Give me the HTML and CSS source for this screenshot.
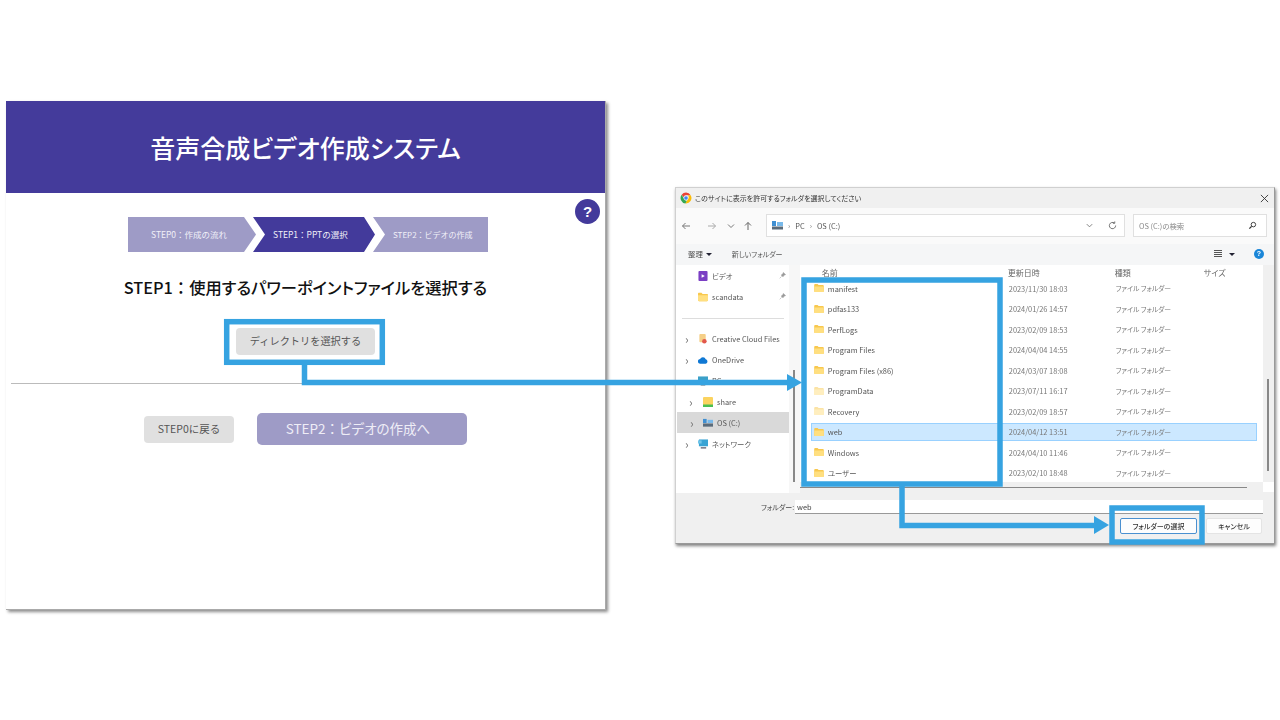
FILE: index.html
```html
<!DOCTYPE html>
<html lang="ja">
  <head>
    <meta charset="UTF-8" />
    <title>音声合成ビデオ作成システム</title>
    <link rel="stylesheet" href="styles.css">
  </head>
  <body>
    <svg class="defs" width="0" height="0">
      <symbol id="folder" viewBox="0 0 12 10">
        <path d="M0 1.2C0 .5.5 0 1.2 0h3l1.3 1.3h5.3c.7 0 1.2.5 1.2 1.2V9c0 .6-.5 1-1.2 1H1.2C.5 10 0 9.600 0 9z" fill="#f8c84e"/>
        <path d="M0 3h12v6c0 .6-.5 1-1.200 1H1.200C.5 10 0 9.600 0 9z" fill="#ffdf80"/>
      </symbol>
    </svg>

    <main class="canvas">
      <!-- left: the web app -->
      <section class="app">
        <header class="app-header">
          <h1>音声合成ビデオ作成システム</h1>
        </header>
        <div class="help">?</div>
        <div class="steps">
          <div class="step step-first">STEP0：作成の流れ</div>
          <div class="step step-current">STEP1：PPTの選択</div>
          <div class="step step-last">STEP2：ビデオの作成</div>
        </div>
        <h2 class="app-title">STEP1<span class="colon">：</span>使用するパワーポイントファイルを選択する</h2>
        <div class="dir-row">
          <button class="btn-grey btn-dir">ディレクトリを選択する</button>
        </div>
        <hr class="app-line" />
        <div class="nav-row">
          <button class="btn-grey btn-back">STEP0に戻る</button>
          <button class="btn-next">STEP2<span class="colon">：</span>ビデオの作成へ</button>
        </div>
      </section>

      <!-- right: folder picker dialog -->
      <section class="dialog">
        <div class="titlebar">
          <svg class="chrome" viewBox="0 0 20 20">
            <path d="M10 1a9 9 0 0 1 7.800 4.500H10a4.500 4.500 0 0 0-4.300 3.200L2.800 4.600A9 9 0 0 1 10 1z" fill="#ea4335"/>
            <path d="M2.800 4.600l4.300 7.600a4.500 4.500 0 0 0 4.800 2.200L9 19a9 9 0 0 1-6.200-14.400z" fill="#34a853"/>
            <path d="M17.800 5.500A9 9 0 0 1 9 19l4.400-7.500a4.500 4.500 0 0 0-.3-6z" fill="#fbbc05"/>
            <circle cx="10" cy="10" r="3.500" fill="#4285f4" stroke="#fff" stroke-width=".8"/>
          </svg>
          <span class="titlebar-text">このサイトに表示を許可するフォルダを選択してください</span>
          <svg class="close" viewBox="0 0 10 10"><path d="M1 1l8 8M9 1l-8 8" stroke="#333" stroke-width="1" fill="none"/></svg>
        </div>

        <div class="address">
          <svg class="arrow-ico dim2" viewBox="0 0 10 10"><path d="M9 5H1.500M4.500 2L1.500 5l3 3" stroke="#777" fill="none"/></svg>
          <svg class="arrow-ico dim" viewBox="0 0 10 10"><path d="M1 5h7.500M5.500 2l3 3-3 3" stroke="#aaa" fill="none"/></svg>
          <svg class="arrow-ico small" viewBox="0 0 10 10"><path d="M2 3.500l3 3 3-3" stroke="#777" fill="none"/></svg>
          <svg class="arrow-ico" viewBox="0 0 10 10"><path d="M5 9V1.500M2 4.500l3-3 3 3" stroke="#666" fill="none"/></svg>
          <div class="pathbox">
            <svg class="pc-ico" viewBox="0 0 11 9"><rect x="0" y="0" width="4" height="5" fill="#3f8fd2"/><rect x="5" y="1" width="6" height="4" fill="#78b9ea"/><rect x="0" y="5.500" width="11" height="3" fill="#5a6b7a"/></svg>
            <span class="crumb">›</span><span>PC</span><span class="crumb">›</span><span>OS (C:)</span>
            <span class="spacer"></span>
            <svg class="path-chev" viewBox="0 0 10 10"><path d="M2 3.500l3 3 3-3" stroke="#777" fill="none"/></svg>
            <svg class="refresh" viewBox="0 0 10 10"><path d="M8.500 5A3.500 3.500 0 1 1 7 2.200M7.500 .5V2.500H5.500" stroke="#666" fill="none"/></svg>
          </div>
          <div class="searchbox">
            <span>OS (C:)の検索</span>
            <svg class="search-ico" viewBox="0 0 10 10"><circle cx="6" cy="4" r="2.500" stroke="#333" fill="none"/><path d="M4 6L1.500 8.500" stroke="#333" stroke-width="1.400"/></svg>
          </div>
        </div>

        <div class="toolbar">
          <span class="tool-org">整理</span><span class="caret"></span>
          <span class="tool-new">新しいフォルダー</span>
          <span class="spacer"></span>
          <svg class="view-ico" viewBox="0 0 8 7"><path d="M0 .5h8M0 2.500h8M0 4.500h8M0 6.500h8" stroke="#555"/></svg>
          <span class="caret caret-view"></span>
          <div class="info">?</div>
        </div>

        <div class="body">
          <nav class="tree">
            <div class="tree-row lv1">
              <svg class="tree-ico" viewBox="0 0 10 11"><rect width="10" height="11" rx="1" fill="#7b3fc4"/><path d="M3.500 3.500l3.500 2-3.500 2z" fill="#fff"/></svg>
              <span>ビデオ</span>
              <svg class="pin" viewBox="0 0 8 8"><path d="M5 .5l2.500 2.500-1.500.5-1.500 2L2.500 3.500l2-1.500zM3 5L.8 7.200" stroke="#999" fill="#999" stroke-width=".6"/></svg>
            </div>
            <div class="tree-row lv1">
              <svg class="tree-ico"><use href="#folder"/></svg>
              <span>scandata</span>
              <svg class="pin" viewBox="0 0 8 8"><path d="M5 .5l2.500 2.500-1.500.5-1.500 2L2.500 3.500l2-1.500zM3 5L.8 7.200" stroke="#999" fill="#999" stroke-width=".6"/></svg>
            </div>
            <div class="tree-sep"></div>
            <div class="tree-row lv1">
              <span class="chev">›</span>
              <svg class="tree-ico" viewBox="0 0 10 11"><rect x="1" y="0" width="7" height="9" rx="1" fill="#f5cf87"/><circle cx="6.500" cy="8" r="2.500" fill="#e2574c"/></svg>
              <span>Creative Cloud Files</span>
            </div>
            <div class="tree-row lv1">
              <span class="chev">›</span>
              <svg class="tree-ico" viewBox="0 0 11 8"><path d="M2.500 8A2.500 2.500 0 0 1 2.300 3 3.300 3.300 0 0 1 8.500 3.300 2.400 2.400 0 0 1 8.500 8z" fill="#0f78d4"/></svg>
              <span>OneDrive</span>
            </div>
            <div class="tree-row lv1">
              <span class="chev">›</span>
              <svg class="tree-ico" viewBox="0 0 11 10"><rect width="11" height="7.500" fill="#3ba0c8"/><rect x="3" y="8.500" width="5" height="1.500" fill="#777"/></svg>
              <span>PC</span>
            </div>
            <div class="tree-row lv2">
              <span class="chev">›</span>
              <svg class="tree-ico" viewBox="0 0 10 10"><rect width="10" height="10" rx="1" fill="#fbd35f"/><rect y="7.500" width="10" height="2.500" fill="#4bbf52"/></svg>
              <span>share</span>
            </div>
            <div class="tree-row lv2 tree-sel">
              <span class="chev">›</span>
              <svg class="tree-ico" viewBox="0 0 11 9"><rect width="4" height="4.500" fill="#3f8fd2"/><rect x="5" y="1" width="6" height="3.500" fill="#78b9ea"/><rect y="5" width="11" height="3.500" fill="#5a6b7a"/></svg>
              <span>OS (C:)</span>
            </div>
            <div class="tree-row lv1">
              <span class="chev">›</span>
              <svg class="tree-ico" viewBox="0 0 11 10"><rect x="1" y="0" width="10" height="7.500" fill="#38a3d4"/><rect x="0" y="1" width="4" height="3.500" fill="#6fc4e8"/><rect x="3" y="8.500" width="6" height="1.500" fill="#667"/></svg>
              <span>ネットワーク</span>
            </div>
          </nav>
          <div class="tree-scroll"><div class="tree-thumb"></div></div>

          <div class="list">
            <div class="list-head">
              <span class="head-name">名前</span>
              <span class="head-date">更新日時</span>
              <span class="head-type">種類</span>
              <span class="head-size">サイズ</span>
            </div>
            <div class="file"><svg class="file-ico"><use href="#folder"/></svg><span class="file-name">manifest</span><span class="file-date">2023/11/30 18:03</span><span class="file-type">ファイル フォルダー</span></div>
            <div class="file"><svg class="file-ico"><use href="#folder"/></svg><span class="file-name">pdfas133</span><span class="file-date">2024/01/26 14:57</span><span class="file-type">ファイル フォルダー</span></div>
            <div class="file"><svg class="file-ico"><use href="#folder"/></svg><span class="file-name">PerfLogs</span><span class="file-date">2023/02/09 18:53</span><span class="file-type">ファイル フォルダー</span></div>
            <div class="file"><svg class="file-ico"><use href="#folder"/></svg><span class="file-name">Program Files</span><span class="file-date">2024/04/04 14:55</span><span class="file-type">ファイル フォルダー</span></div>
            <div class="file"><svg class="file-ico"><use href="#folder"/></svg><span class="file-name">Program Files (x86)</span><span class="file-date">2024/03/07 18:08</span><span class="file-type">ファイル フォルダー</span></div>
            <div class="file file-hidden"><svg class="file-ico"><use href="#folder"/></svg><span class="file-name">ProgramData</span><span class="file-date">2023/07/11 16:17</span><span class="file-type">ファイル フォルダー</span></div>
            <div class="file file-hidden"><svg class="file-ico"><use href="#folder"/></svg><span class="file-name">Recovery</span><span class="file-date">2023/02/09 18:57</span><span class="file-type">ファイル フォルダー</span></div>
            <div class="file file-sel"><svg class="file-ico"><use href="#folder"/></svg><span class="file-name">web</span><span class="file-date">2024/04/12 13:51</span><span class="file-type">ファイル フォルダー</span></div>
            <div class="file"><svg class="file-ico"><use href="#folder"/></svg><span class="file-name">Windows</span><span class="file-date">2024/04/10 11:46</span><span class="file-type">ファイル フォルダー</span></div>
            <div class="file"><svg class="file-ico"><use href="#folder"/></svg><span class="file-name">ユーザー</span><span class="file-date">2023/02/10 18:48</span><span class="file-type">ファイル フォルダー</span></div>
            <div class="hscroll"></div>
          </div>
          <div class="vscroll"><div class="vthumb"></div></div>
        </div>

        <div class="footer">
          <div class="folder-row">
            <span class="folder-label">フォルダー:</span>
            <div class="folder-input">web</div>
          </div>
          <div class="button-row">
            <button class="dlg-btn dlg-primary">フォルダーの選択</button>
            <button class="dlg-btn dlg-cancel">キャンセル</button>
          </div>
        </div>
      </section>

      <!-- blue callouts on top of both -->
      <svg class="callouts" viewBox="0 0 1280 720">
        <g fill="none" stroke="#36a3e1" stroke-width="5.500">
          <rect x="226.700" y="321.700" width="155.600" height="40.600"/>
          <rect x="804" y="280" width="196" height="204"/>
          <rect x="1112" y="508" width="90" height="34"/>
          <path d="M304.500 364V382.500H790"/>
          <path d="M902 486V525.500H1097"/>
        </g>
        <path d="M787 374L802 382.500 787 391z" fill="#36a3e1"/>
        <path d="M1094 516L1109 525 1094 534z" fill="#36a3e1"/>
      </svg>
    </main>
  </body>
</html>
```

FILE: styles.css
```css
/* General Styling */
* {
  box-sizing: border-box;
}

body {
  margin: 0;
  background-color: #fff;
  font-family: "Noto Sans CJK JP", "Noto Sans", sans-serif;
  color: #333;
}

button {
  font-family: inherit;
  border: none;
  padding: 0;
}

.defs {
  position: absolute;
}

.canvas {
  position: relative;
  width: 1280px;
  height: 720px;
  overflow: hidden;
}

.spacer {
  flex: 1;
}

.colon {
  font-feature-settings: normal;
}

/* Web app card */
.app {
  position: absolute;
  left: 6px;
  top: 101px;
  width: 600px;
  height: 509px;
  background: #fff;
  border-right: 1px solid #aaa;
  border-bottom: 1px solid #aaa;
  box-shadow: 2px 2px 3px rgba(0, 0, 0, 0.45);
}

.app-header {
  height: 92px;
  background-color: #443b9b;
  display: flex;
  align-items: center;
  justify-content: center;
  padding-bottom: 1px;
}

.app-header h1 {
  margin: 0;
  color: #fff;
  font-size: 25px;
  font-weight: 500;
  font-feature-settings: "palt";
}

.help {
  position: absolute;
  left: 569px;
  top: 98px;
  width: 25px;
  height: 25px;
  border-radius: 50%;
  background-color: #433a9b;
  color: #fff;
  font: bold 15px/25px "Liberation Sans", sans-serif;
  text-align: center;
}

.steps {
  display: flex;
  margin: 24px 0 0 122px;
  height: 35px;
}

.step {
  height: 35px;
  color: #f1f0f8;
  font-size: 8.500px;
  line-height: 35px;
  background-color: #9e9bc6;
}

.step-first {
  width: 128px;
  padding-left: 23px;
  clip-path: polygon(0 0, 116px 0, 100% 50%, 116px 100%, 0 100%);
}

.step-current {
  width: 122px;
  margin-left: -3px;
  padding-left: 20px;
  background-color: #433a9b;
  clip-path: polygon(0 0, 111px 0, 100% 50%, 111px 100%, 0 100%, 12px 50%);
}

.step-last {
  width: 115px;
  margin-left: -2px;
  padding-left: 20px;
  font-size: 8px;
  clip-path: polygon(0 0, 100% 0, 100% 100%, 0 100%, 12px 50%);
}

.app-title {
  margin: 20px 0 0;
  height: 30px;
  text-align: center;
  color: #111;
  font-size: 16.300px;
  line-height: 30px;
  font-weight: 500;
  font-feature-settings: "palt";
}

.dir-row {
  display: flex;
  justify-content: center;
  margin-top: 26px;
}

.btn-grey {
  background-color: #e0e0e0;
  color: #555;
  border-radius: 4px;
  padding-bottom: 3px;
}

.btn-dir {
  width: 139px;
  height: 27px;
  font-size: 10.200px;
}

.app-line {
  margin: 28px 5px 0;
  border: none;
  border-top: 1px solid #bbb;
}

.nav-row {
  display: flex;
  align-items: center;
  margin: 29px 0 0 138px;
  gap: 23px;
}

.btn-back {
  width: 90px;
  height: 27px;
  padding-bottom: 1px;
  font-size: 10.500px;
}

.btn-next {
  width: 210px;
  height: 32px;
  border-radius: 5px;
  background-color: #9e9bc6;
  color: #eeedf6;
  font-size: 13.500px;
  padding: 0 8px 2px 0;
  font-feature-settings: "palt";
}

/* Folder picker dialog */
.dialog {
  position: absolute;
  left: 675px;
  top: 187px;
  width: 600px;
  height: 357px;
  display: flex;
  flex-direction: column;
  background: #fff;
  border: 1px solid #d0d0d0;
  border-right-color: #999;
  border-bottom-color: #999;
  box-shadow: 1px 2px 3px rgba(0, 0, 0, 0.5);
  font-size: 7.400px;
  font-feature-settings: "palt";
  color: #555;
  filter: blur(0.25px);
}

.titlebar {
  height: 20px;
  background-color: #f0f0f0;
  display: flex;
  align-items: center;
  padding: 0 5px 0 4px;
}

.chrome {
  width: 12px;
  height: 12px;
  margin-right: 3px;
}

.titlebar-text {
  flex: 1;
  font-size: 7px;
  color: #333;
}

.close {
  width: 9px;
  height: 9px;
}

.address {
  height: 36px;
  background-color: #fafafa;
  display: flex;
  align-items: center;
  padding: 0 7px 1px 5px;
}

.arrow-ico {
  width: 10px;
  height: 10px;
  margin-right: 9px;
}

.arrow-ico.small {
  margin-right: 7px;
}

.arrow-ico.dim2 {
  margin-right: 16px;
}

.pathbox {
  margin-left: 4px;
  width: 359px;
  height: 23px;
  border: 1px solid #e0e0e0;
  background: #fff;
  display: flex;
  align-items: center;
  padding: 0 7px 0 5px;
  gap: 5px;
  color: #555;
}

.pc-ico {
  width: 11px;
  height: 9px;
}

.crumb {
  color: #777;
}

.path-chev {
  width: 9px;
  height: 9px;
  margin-right: 9px;
}

.refresh {
  width: 9px;
  height: 9px;
}

.searchbox {
  margin-left: 8px;
  width: 134px;
  height: 23px;
  border: 1px solid #e0e0e0;
  background: #fff;
  display: flex;
  align-items: center;
  justify-content: space-between;
  padding: 0 9px 0 5px;
  color: #888;
}

.search-ico {
  width: 9px;
  height: 9px;
}

.toolbar {
  height: 21px;
  background-color: #f5f6f7;
  display: flex;
  align-items: center;
  padding: 0 10px 2px 12px;
}

.tool-org {
  color: #444;
}

.caret {
  width: 0;
  height: 0;
  margin: 1px 0 0 3px;
  border-left: 3px solid transparent;
  border-right: 3px solid transparent;
  border-top: 3px solid #223;
}

.tool-new {
  margin-left: 20px;
  font-size: 7px;
  color: #555;
}

.view-ico {
  width: 8px;
  height: 7px;
}

.caret-view {
  margin-left: 7px;
}

.info {
  width: 10px;
  height: 10px;
  margin-left: 19px;
  border-radius: 50%;
  background-color: #1a86d8;
  color: #fff;
  font: bold 7px/10px "Liberation Sans", sans-serif;
  text-align: center;
}

.body {
  height: 230px;
  display: flex;
  background-color: #f0f0f0;
}

.tree {
  width: 113px;
  height: 228px;
  background: #fff;
  color: #555;
}

.tree-row {
  height: 21px;
  display: flex;
  align-items: center;
  position: relative;
}

.tree-row.lv1 {
  padding-left: 22px;
}

.tree-row.lv2 {
  padding-left: 27px;
}

.tree-sel {
  background-color: #d9d9d9;
  margin-left: 1px;
  padding-left: 26px !important;
}

.chev {
  position: absolute;
  left: 9px;
  color: #777;
  font-size: 12px;
}

.lv2 .chev {
  left: 13px;
}

.tree-ico {
  width: 10px;
  height: 10px;
  margin-right: 4px;
}

.pin {
  position: absolute;
  left: 103px;
  width: 7px;
  height: 7px;
}

.tree-sep {
  height: 21px;
  position: relative;
}

.tree-sep::after {
  content: "";
  position: absolute;
  left: 6px;
  right: 5px;
  top: 11px;
  border-top: 1px solid #ddd;
}

.tree-scroll {
  width: 11px;
  height: 228px;
  background-color: #f7f7f7;
  position: relative;
}

.tree-thumb {
  position: absolute;
  left: 4px;
  top: 105px;
  width: 2px;
  bottom: 11px;
  background-color: #888;
}

.list {
  width: 464px;
  background: #fff;
  height: 217px;
  position: relative;
}

.list-head {
  height: 13px;
  position: relative;
  color: #666;
  font-size: 8px;
}

.list-head span {
  position: absolute;
  top: 1px;
  line-height: 13px;
}

.head-name { left: 22px; }
.head-date { left: 208px; }
.head-type { left: 315px; }
.head-size { left: 404px; }

.file {
  height: 20.500px;
  display: grid;
  grid-template-columns: 14px 181px 107px 1fr;
  align-items: center;
  padding-left: 14px;
  margin-right: 7px;
  color: #777;
}

.file-ico {
  width: 10px;
  height: 8px;
}

.file-name {
  color: #555;
}

.file-type {
  font-size: 6.800px;
}

.file-hidden .file-ico {
  opacity: 0.5;
}

.file-sel {
  height: 18.500px;
  margin: 1px 6px 1px 11px;
  background-color: #cce8ff;
  box-shadow: inset 0 0 0 1px #99d1ff;
  padding-left: 3px;
}

.hscroll {
  position: absolute;
  left: 0;
  right: 16px;
  top: 222px;
  border-top: 1px solid #888;
}

.vscroll {
  width: 11px;
  height: 217px;
  position: relative;
  background-color: #f0f0f0;
}

.vscroll::after {
  content: "";
  position: absolute;
  left: 0;
  right: 0;
  top: 217px;
  height: 10px;
  background: #fff;
}

.vthumb {
  position: absolute;
  left: 4px;
  top: 114px;
  bottom: 11px;
  width: 2px;
  background-color: #888;
}

.footer {
  flex: 1;
  background-color: #f0f0f0;
  padding-top: 5px;
}

.folder-row {
  display: flex;
  align-items: center;
  padding-left: 85px;
}

.folder-label {
  width: 34px;
  font-size: 7px;
  white-space: nowrap;
  color: #444;
}

.folder-input {
  width: 468px;
  height: 14px;
  line-height: 13px;
  background: #fff;
  border-bottom: 1px solid #999;
  padding-left: 2px;
  color: #444;
}

.button-row {
  display: flex;
  gap: 9px;
  margin: 4px 0 0 444px;
}

.dlg-btn {
  height: 16px;
  font-size: 7px;
  font-weight: 500;
  background: #fdfdfd;
  color: #333;
  border-radius: 2px;
  border: 1px solid #e4e4e4;
  font-feature-settings: "palt";
}

.dlg-primary {
  width: 77px;
  border-color: #4a90d0;
}

.dlg-cancel {
  width: 56px;
}

/* Annotations */
.callouts {
  position: absolute;
  left: 0;
  top: 0;
  width: 1280px;
  height: 720px;
}
```
